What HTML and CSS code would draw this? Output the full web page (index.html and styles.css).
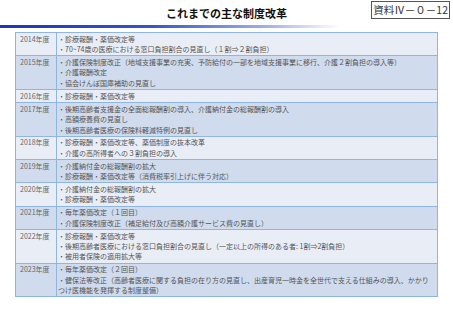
FILE: index.html
```html
<!DOCTYPE html>
<html lang="ja">
<head>
<meta charset="utf-8">
<link rel="stylesheet" href="styles.css">
</head>
<body>
<header class="head">
  <div></div>
  <h1 class="title">これまでの主な制度改革</h1>
  <div class="badge">資料Ⅳ－０－12</div>
</header>
<div class="rule"></div>
<table class="tbl">
  <tr class="lt"><th>2014年度</th><td>・診療報酬・薬価改定等<br>・70~74歳の医療における窓口負担割合の見直し（１割⇒２割負担）</td></tr>
  <tr class="dk"><th>2015年度</th><td>・介護保険制度改正（地域支援事業の充実、予防給付の一部を地域支援事業に移行、介護２割負担の導入等）<br>・介護報酬改定<br>・協会けんぽ国庫補助の見直し</td></tr>
  <tr class="lt"><th>2016年度</th><td>・診療報酬・薬価改定等</td></tr>
  <tr class="dk"><th>2017年度</th><td>・後期高齢者支援金の全面総報酬割の導入、介護納付金の総報酬割の導入<br>・高額療養費の見直し<br>・後期高齢者医療の保険料軽減特例の見直し</td></tr>
  <tr class="lt"><th>2018年度</th><td>・診療報酬・薬価改定等、薬価制度の抜本改革<br>・介護の高所得者への３割負担の導入</td></tr>
  <tr class="dk"><th>2019年度</th><td>・介護納付金の総報酬割の拡大<br>・診療報酬・薬価改定等（消費税率引上げに伴う対応）</td></tr>
  <tr class="lt"><th>2020年度</th><td>・介護納付金の総報酬割の拡大<br>・診療報酬・薬価改定等</td></tr>
  <tr class="dk"><th>2021年度</th><td>・毎年薬価改定（１回目）<br>・介護保険制度改正（補足給付及び高額介護サービス費の見直し）</td></tr>
  <tr class="lt"><th>2022年度</th><td>・診療報酬・薬価改定等<br>・後期高齢者医療における窓口負担割合の見直し（一定以上の所得のある者: 1割⇒2割負担）<br>・被用者保険の適用拡大等</td></tr>
  <tr class="dk"><th>2023年度</th><td>・毎年薬価改定（２回目）<br>・健保法等改正（高齢者医療に関する負担の在り方の見直し、出産育児一時金を全世代で支える仕組みの導入、かかりつけ医機能を発揮する制度整備）</td></tr>
</table>
</body>
</html>
```

FILE: styles.css
```css
html, body {
  margin: 0;
  padding: 0;
  background: #ffffff;
}
body {
  font-family: "Noto Sans CJK JP", "Noto Sans", sans-serif;
  color: #555;
  width: 453px;
}
.head {
  display: grid;
  grid-template-columns: 1fr auto 1fr;
  align-items: start;
  height: 24px;
}
.title {
  margin: 6px 0 0;
  font-size: 11px;
  line-height: 14px;
  font-weight: 700;
  color: #111;
  letter-spacing: 0;
}
.badge {
  justify-self: end;
  margin: 1px 3px 0 0;
  border: 1px solid #555;
  background: #fff;
  color: #333;
  font-size: 10.5px;
  line-height: 16px;
  padding: 0 1px;
  white-space: nowrap;
}
.rule {
  height: 3px;
  margin-top: 1px;
  width: 340px;
  background: linear-gradient(to right, #1b35b8 0%, #3456cc 45%, #a9b4ea 80%, #ffffff 100%);
}
.tbl {
  margin: 4px 15px 0 15px;
  width: 423px;
  border-collapse: collapse;
  border: 1px solid #8fb6e0;
  font-size: 7px;
  line-height: 10.4px;
}
.tbl th, .tbl td {
  border: 1px solid #8fb6e0;
  padding: 0.75px 3px 0.75px 4px;
  vertical-align: top;
  text-align: left;
}
.tbl th {
  width: 33px;
  font-weight: 400;
  color: #666;
  padding-left: 4px;
  white-space: nowrap;
}
.tbl td {
  padding-left: 1px;
  color: #555;
}
.lt th, .lt td { background: #e9edf6; }
.dk th, .dk td { background: #d0dbed; }
```
